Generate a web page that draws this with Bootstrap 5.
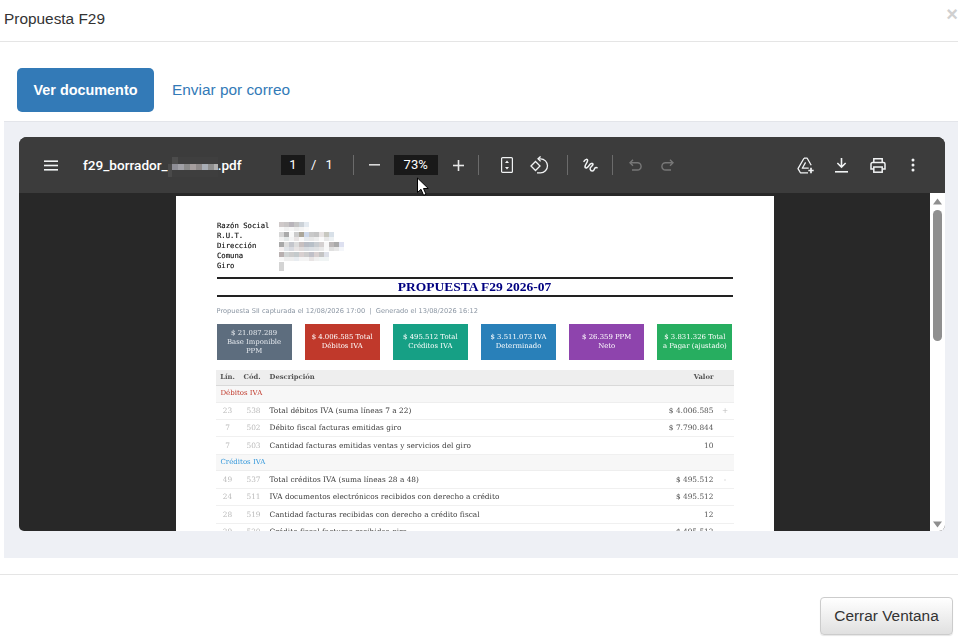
<!DOCTYPE html>
<html lang="es">
<head>
<meta charset="utf-8">
<title>Propuesta F29</title>
<link href="https://cdn.jsdelivr.net/npm/bootstrap@5.3.0/dist/css/bootstrap.min.css" rel="stylesheet">
<style>
html,body{height:644px;overflow:hidden;background:#fff}
body{font-family:"Liberation Sans",Arial,sans-serif;color:#333;position:relative}
.dlg-head{height:42px;border-bottom:1px solid #e5e5e5;padding-left:4px;padding-right:0}
.dlg-title{font-size:15.4px;color:#333;line-height:1;margin:-4px 0 0;font-weight:400}
.dlg-x{font-size:20px;font-weight:700;color:#d0d0d0;line-height:1;margin-top:-13px;width:12px;background:none;border:0;padding:0;text-align:center}
.tab-row{padding:26px 0 9px 17px;gap:18px}
.btn-ver{background:#337ab7;border:0;color:#fff;font-weight:700;font-size:14.4px;height:44px;width:137px;border-radius:5px;padding:1px 0 0}
.lnk-mail{color:#337ab7;text-decoration:none;font-size:15.4px}
.panel-pdf{margin-left:4px;height:437px;background:#eef0f5;border-top:1px solid #e3e5ea;padding:15px 13px 0 15px}
.viewer{height:394px;border-radius:8px 8px 6px 5px;overflow:hidden;background:#282828}
.tbar{height:56px;background:#3c3c3c;color:#f1f3f4;padding-left:25px;flex:none}
.tb-name{font-family:Roboto,"Liberation Sans",sans-serif;font-weight:500;font-size:13.6px;color:#fff;margin-left:25px;width:198px;flex:none;white-space:nowrap;padding-top:2px}
.tb-box{background:#191919;height:20px;font-family:Roboto,sans-serif;font-size:13px;color:#fff;flex:none}
.tb-pg{width:24px}.tb-zoom{width:44px}
.tb-txt{font-family:Roboto,sans-serif;font-size:13px;color:#fff}
.tb-sep{width:1px;height:20px;background:#6b6b6b;flex:none}
.tbar svg{flex:none;display:block}
.ml-6{margin-left:6px}.ml-9{margin-left:9px}.ml-14{margin-left:14px}.ml-15{margin-left:15px}.ml-16{margin-left:16px}.ml-17{margin-left:17px}.ml-18{margin-left:18px}.ml-19{margin-left:19px}.ml-20{margin-left:20px}.ml-22{margin-left:22px}.ml-25{margin-left:25px}.ml-123{margin-left:123px}
.vw-main{flex:1;min-height:0}
.vw-canvas{flex:1;padding-top:3px;overflow:hidden}
.sheet{width:598px;height:335px;background:#fff;padding:25px 41px 0;overflow:hidden;filter:blur(.3px)}
.vw-scroll{width:15px;background:#fff;padding:5px 2px 3px 3px;flex:none}
.sc-thumb{width:9px;height:131px;background:#8f8f8f;border-radius:5px;margin-top:5px}
.sc-down{margin-top:auto}
.meta-row{font-family:"DejaVu Sans Mono",monospace;font-size:7.25px;line-height:10px;color:#111;height:10px;-webkit-text-stroke:.15px #111}
.meta-key{width:62px;flex:none;padding-left:.5px}
.mosaic{display:block;height:10px;background-repeat:no-repeat;background-size:100% 5px;background-position:0 1px,0 6px}
.mo-1{width:30px;background-image:linear-gradient(90deg,#cfc9c9 0 5px,#c8c5c5 5px 10px,#b9b5bb 10px 15px,#c5c5c5 15px 20px,#ccd2d8 20px 25px,#e4eaf0 25px),linear-gradient(90deg,#f9f9f9 0 5px,#f0f0f0 5px 10px,#f6f6f6 10px 15px,#eee 15px 20px,#f4f4f4 20px 25px,#fafafa 25px)}
.mo-2{width:55px;background-image:linear-gradient(90deg,#d5d5d5 0 5px,#aaa 5px 10px,#f9f9f9 10px 15px,#ccc 15px 20px,#aba69a 20px 25px,#cdd8ea 25px 30px,#c9c9c9 30px 35px,#c4c4c4 35px 40px,#e8e4e4 40px 45px,#c8c8c0 45px 50px,#d8e0e8 50px),linear-gradient(90deg,#f2f2f2 0 5px,#e4e8e8 5px 10px,#f4f4f4 10px 15px,#e8e4e4 15px 20px,#f8f8f8 20px 25px,#e6eaee 25px 30px,#e8e8e8 30px 35px,#eee 35px 40px,#fafafa 40px 45px,#e8e8e8 45px 50px,#eef2f4 50px)}
.mo-3{width:65px;background-image:linear-gradient(90deg,#a8a8a8 0 5px,#ddd 5px 10px,#c4c6cc 10px 15px,#dcdcdc 15px 20px,#c8c0c0 20px 25px,#b8bcc4 25px 30px,#b8c0c8 30px 35px,#c8ccd0 35px 40px,#d4d0d0 40px 45px,#f8f8f8 45px 50px,#bcb8b8 50px 55px,#aaa 55px 60px,#dde0f0 60px),linear-gradient(90deg,#f4f0f0 0 5px,#e0e4e8 5px 10px,#d8dae0 10px 15px,#e8e4e4 15px 20px,#e0dcdc 20px 25px,#d8dce0 25px 30px,#dce0e4 30px 35px,#e0e2e4 35px 40px,#e8e8e8 40px 45px,#f8f8f8 45px 50px,#e0e0e0 50px 55px,#e8e8e8 55px 60px,#f4f6fa 60px)}
.mo-4{width:55px;background-image:linear-gradient(90deg,#b8b0b0 0 5px,#d0d4d4 5px 10px,#ccc 10px 15px,#c4cacc 15px 20px,#d8d0d0 20px 25px,#ccc 25px 30px,#c0c0c8 30px 35px,#d8d0d0 35px 40px,#c4c4c4 40px 45px,#dde0e8 45px 50px,#fff 50px),linear-gradient(90deg,#f8f8f8 0 5px,#eee 5px 15px,#e8ecf0 15px 20px,#f4f4f4 20px 30px,#e8e4e4 30px 35px,#f0f0f0 35px 40px,#f0f4f4 40px 50px,#fff 50px)}
.mo-5{width:5px;background-image:linear-gradient(#d4d4d4,#d4d4d4),linear-gradient(#d4d4d4,#d4d4d4)}
.mosaic-name{display:inline-block;width:50px;height:20px;vertical-align:middle;background-repeat:no-repeat;background-size:100% 7px,100% 6px,100% 7px;background-position:0 0,0 7px,0 13px;
 background-image:linear-gradient(90deg,#3c3c3c 0 4px,#4c4c4c 4px 10px,#3f3f3f 10px),linear-gradient(90deg,#4a4a4a 0 4px,#8e8e96 4px 10px,#a0a0a6 10px 16px,#8a8a8a 16px 22px,#a59e9e 22px 28px,#8f8a8a 28px 34px,#a8adb5 34px 40px,#8f8f8f 40px 46px,#b0b0b0 46px),linear-gradient(90deg,#4a4a4a 0 4px,#3e3e3e 4px)}
.doc-title{margin-top:6px;height:20px;border-top:2px solid #222;border-bottom:2px solid #222;font-family:"Liberation Serif",serif;font-weight:700;font-size:13.5px;line-height:16px;color:#000080;text-align:center}
.doc-sub{font-family:"DejaVu Sans",sans-serif;font-size:6.63px;line-height:10px;color:#8b96a3;margin-top:9px}
.kpis{gap:13px;margin-top:8px}
.kpi{flex:0 0 75.17px;height:36px;font-family:"DejaVu Serif",serif;font-size:6.9px;line-height:9px;color:#fff;text-align:center;padding:0 6px}
.k-a{background:#5d6d7e;color:#e6eaef}.k-b{background:#c0392b}.k-c{background:#16a085}.k-d{background:#2980b9}.k-e{background:#8e44ad}.k-f{background:#27ae60;padding:0 4px}
.tbl-f29.table{table-layout:fixed;width:518px;margin:10px 0 0 -1px;font-family:"DejaVu Serif",serif;font-size:7.4px;color:#3a3a3a;--bs-table-bg:transparent}
.tbl-f29.table>*>*>*{padding:0;height:17.4px;vertical-align:middle;border-bottom:1px solid #f0f0f0;line-height:1;color:inherit;background:transparent;box-shadow:none}
.tbl-f29.table>thead>tr>th{height:15.5px;background:#eee;color:#555;font-weight:700;border-bottom:1px solid #d9d9d9;font-size:6.8px}
.tbl-f29.table td.sec-row{height:16.6px;background:#f7f7f7;padding-left:5px;font-size:7px;border-bottom:1px solid #eee}
.tbl-f29.table td.sec-deb{color:#c0392b}.tbl-f29.table td.sec-cre{color:#3498db}
.tbl-f29.table td.c-n{color:#bbb;text-align:center}
.tbl-f29.table td.c-v{text-align:right;color:#555}
.tbl-f29.table td.c-s{text-align:center;color:#bbb;padding-left:3px}
.tbl-f29.table .h-desc{padding-left:6px}
.tbl-f29.table .h-cod{padding-left:4px;text-align:left}
.foot-row{margin-top:16px;border-top:1px solid #e5e5e5;padding:22px 5px 0 0}
.btn-cerrar{height:38px;width:133px;padding:0;background:linear-gradient(#fff,#e0e0e0);border:1px solid #ccc;border-radius:4px;font-size:15.4px;color:#333;box-shadow:0 1px 1px rgba(0,0,0,.1)}
.mouse-ptr{position:absolute;left:416px;top:177px}
</style>
</head>
<body>
<header class="dlg-head d-flex align-items-center justify-content-between">
  <h1 class="dlg-title">Propuesta F29</h1>
  <button class="dlg-x" type="button" aria-label="Cerrar">×</button>
</header>

<div class="tab-row d-flex align-items-center">
  <button class="btn btn-ver" type="button">Ver documento</button>
  <a class="lnk-mail" href="#">Enviar por correo</a>
</div>

<section class="panel-pdf">
  <div class="viewer d-flex flex-column">
    <div class="tbar d-flex align-items-center">
      <svg width="14" height="11" viewBox="0 0 14 11" fill="#f1f3f4"><rect width="14" height="1.6" y="0.4"/><rect width="14" height="1.6" y="4.7"/><rect width="14" height="1.6" y="9"/></svg>
      <div class="tb-name">f29_borrador_<span class="mosaic-name"></span>.pdf</div>
      <div class="tb-box tb-pg d-flex align-items-center justify-content-center">1</div>
      <span class="tb-txt ml-6">/</span>
      <span class="tb-txt ml-9">1</span>
      <span class="tb-sep ml-20"></span>
      <svg class="ml-15" width="11" height="2" viewBox="0 0 11 2" fill="#d8d8d8"><rect width="11" height="1.6"/></svg>
      <div class="tb-box tb-zoom ml-14 d-flex align-items-center justify-content-center">73%</div>
      <svg class="ml-15" width="11" height="11" viewBox="0 0 11 11" fill="#e8e8e8"><rect y="4.7" width="11" height="1.6"/><rect x="4.7" width="1.6" height="11"/></svg>
      <span class="tb-sep ml-14"></span>
      <svg class="ml-22" width="12" height="16" viewBox="0 0 12 16" fill="none" stroke="#f1f3f4" stroke-width="1.2"><rect x=".6" y=".6" width="10.8" height="14.8" rx="1"/><path d="M6 3.6 8 6H4Z M6 12.4 8 10H4Z" fill="#f1f3f4" stroke="none"/></svg>
      <svg class="ml-17" width="19" height="18" viewBox="0 0 19 18" fill="none" stroke="#f1f3f4" stroke-width="1.3"><path d="M1 10 5.500 5.500 10 10 5.500 14.500Z"/><path d="M8 2.800h2.500a7 7 0 0 1 0 14H7"/><path d="M10.600 .4 8 2.800l2.600 2.600"/></svg>
      <span class="tb-sep ml-18"></span>
      <svg class="ml-15" width="15" height="15" viewBox="0 0 15 15" fill="none" stroke="#f1f3f4" stroke-width="1.500" stroke-linecap="round"><path d="M1 3.400C2.400 1 4.600 .7 4.600 2.600 4.600 5 1.600 6.600 2 9 2.500 11 5 9.500 6.200 7.400 7.300 5.500 9.700 4.800 10 6.200 10.300 8 6.400 8.800 7.200 11.300 7.900 13.600 10.500 13.700 11.400 10.900 11.700 9.900 12.700 9.300 14 9.700"/></svg>
      <span class="tb-sep ml-14"></span>
      <svg class="ml-16" width="13" height="12" viewBox="0 0 13 12" fill="none" stroke="#777" stroke-width="1.4"><path d="M4 .8 1 3.800l3 3"/><path d="M1.400 3.800h7.100a3.600 3.600 0 0 1 0 7.200H3"/></svg>
      <svg class="ml-19" width="13" height="12" viewBox="0 0 13 12" fill="none" stroke="#777" stroke-width="1.4"><path d="M9 .8l3 3-3 3"/><path d="M11.600 3.800H4.500a3.600 3.600 0 0 0 0 7.200H10"/></svg>
      <svg class="ml-123" width="18" height="17" viewBox="0 0 18 17" fill="none" stroke="#f1f3f4" stroke-width="1.300" stroke-linejoin="round"><path d="M7 1.200h3.200l4 7M7 1.200 1 11.600l2.400 4.200H11"/><path d="M8.600 5.400 5.300 11.200h6.400"/><path d="M14 10.800v5.400M11.300 13.500h5.400" stroke-width="1.700"/></svg>
      <svg class="ml-20" width="13" height="15" viewBox="0 0 13 15" fill="#f1f3f4"><path d="M5.700 0h1.600v7.200l2.800-2.800 1.100 1.100L6.500 10.200 1.800 5.500l1.100-1.100 2.800 2.800Z"/><rect y="13" width="13" height="1.600"/></svg>
      <svg class="ml-22" width="16" height="15" viewBox="0 0 16 15" fill="none" stroke="#f1f3f4" stroke-width="1.500"><path d="M3.800 4.500V.8h8.400v3.700"/><path d="M3.800 11H1V6a1.500 1.500 0 0 1 1.500-1.500h11A1.500 1.500 0 0 1 15 6v5h-2.800"/><rect x="3.800" y="9" width="8.400" height="5.200"/></svg>
      <svg class="ml-25" width="4" height="14" viewBox="0 0 4 14" fill="#f1f3f4"><circle cx="2" cy="2" r="1.500"/><circle cx="2" cy="7" r="1.500"/><circle cx="2" cy="12" r="1.500"/></svg>
    </div>
    <div class="vw-main d-flex">
      <div class="vw-canvas d-flex justify-content-center">
        <article class="sheet">
          <div class="meta-row d-flex"><span class="meta-key">Razón Social</span><span class="mosaic mo-1"></span></div>
          <div class="meta-row d-flex"><span class="meta-key">R.U.T.</span><span class="mosaic mo-2"></span></div>
          <div class="meta-row d-flex"><span class="meta-key">Dirección</span><span class="mosaic mo-3"></span></div>
          <div class="meta-row d-flex"><span class="meta-key">Comuna</span><span class="mosaic mo-4"></span></div>
          <div class="meta-row d-flex"><span class="meta-key">Giro</span><span class="mosaic mo-5"></span></div>
          <div class="doc-title">PROPUESTA F29 2026-07</div>
          <div class="doc-sub">Propuesta SII capturada el 12/08/2026 17:00 &nbsp;|&nbsp; Generado el 13/08/2026 16:12</div>
          <div class="kpis d-flex">
            <div class="kpi k-a d-flex align-items-center justify-content-center"><span>$ 21.087.289 Base Imponible PPM</span></div>
            <div class="kpi k-b d-flex align-items-center justify-content-center"><span>$ 4.006.585 Total Débitos IVA</span></div>
            <div class="kpi k-c d-flex align-items-center justify-content-center"><span>$ 495.512 Total Créditos IVA</span></div>
            <div class="kpi k-d d-flex align-items-center justify-content-center"><span>$ 3.511.073 IVA Determinado</span></div>
            <div class="kpi k-e d-flex align-items-center justify-content-center"><span>$ 26.359 PPM Neto</span></div>
            <div class="kpi k-f d-flex align-items-center justify-content-center"><span>$ 3.831.326 Total a Pagar (ajustado)</span></div>
          </div>
          <table class="table tbl-f29">
            <colgroup><col style="width:24px"><col style="width:24px"><col><col style="width:90px"><col style="width:20px"></colgroup>
            <thead><tr><th class="text-center">Lín.</th><th class="h-cod">Cód.</th><th class="h-desc">Descripción</th><th class="text-end">Valor</th><th></th></tr></thead>
            <tbody>
              <tr><td colspan="5" class="sec-row sec-deb">Débitos IVA</td></tr>
              <tr><td class="c-n">23</td><td class="c-n h-cod">538</td><td class="h-desc">Total débitos IVA (suma líneas 7 a 22)</td><td class="c-v">$ 4.006.585</td><td class="c-s">+</td></tr>
              <tr><td class="c-n">7</td><td class="c-n h-cod">502</td><td class="h-desc">Débito fiscal facturas emitidas giro</td><td class="c-v">$ 7.790.844</td><td></td></tr>
              <tr><td class="c-n">7</td><td class="c-n h-cod">503</td><td class="h-desc">Cantidad facturas emitidas ventas y servicios del giro</td><td class="c-v">10</td><td></td></tr>
              <tr><td colspan="5" class="sec-row sec-cre">Créditos IVA</td></tr>
              <tr><td class="c-n">49</td><td class="c-n h-cod">537</td><td class="h-desc">Total créditos IVA (suma líneas 28 a 48)</td><td class="c-v">$ 495.512</td><td class="c-s">-</td></tr>
              <tr><td class="c-n">24</td><td class="c-n h-cod">511</td><td class="h-desc">IVA documentos electrónicos recibidos con derecho a crédito</td><td class="c-v">$ 495.512</td><td></td></tr>
              <tr><td class="c-n">28</td><td class="c-n h-cod">519</td><td class="h-desc">Cantidad facturas recibidas con derecho a crédito fiscal</td><td class="c-v">12</td><td></td></tr>
              <tr><td class="c-n">29</td><td class="c-n h-cod">520</td><td class="h-desc">Crédito fiscal facturas recibidas giro</td><td class="c-v">$ 495.512</td><td></td></tr>
            </tbody>
          </table>
        </article>
      </div>
      <div class="vw-scroll d-flex flex-column">
        <svg width="9" height="7" viewBox="0 0 9 7" fill="#8f8f8f"><path d="M4.500 .5 9 6.500H0Z"/></svg>
        <div class="sc-thumb"></div>
        <svg class="sc-down" width="9" height="7" viewBox="0 0 9 7" fill="#8f8f8f"><path d="M4.500 6.500 9 .5H0Z"/></svg>
      </div>
    </div>
  </div>
</section>

<footer class="foot-row d-flex justify-content-end">
  <button class="btn btn-cerrar" type="button">Cerrar Ventana</button>
</footer>

<svg class="mouse-ptr" width="14" height="20" viewBox="0 0 14 20"><path d="M1.500 1V15.500L5 12.300 7.600 18.300 10 17.200 7.500 11.500H12.300Z" fill="#fff" stroke="#000" stroke-width="1"/></svg>
<script src="https://cdn.jsdelivr.net/npm/bootstrap@5.3.0/dist/js/bootstrap.bundle.min.js"></script>
</body>
</html>
